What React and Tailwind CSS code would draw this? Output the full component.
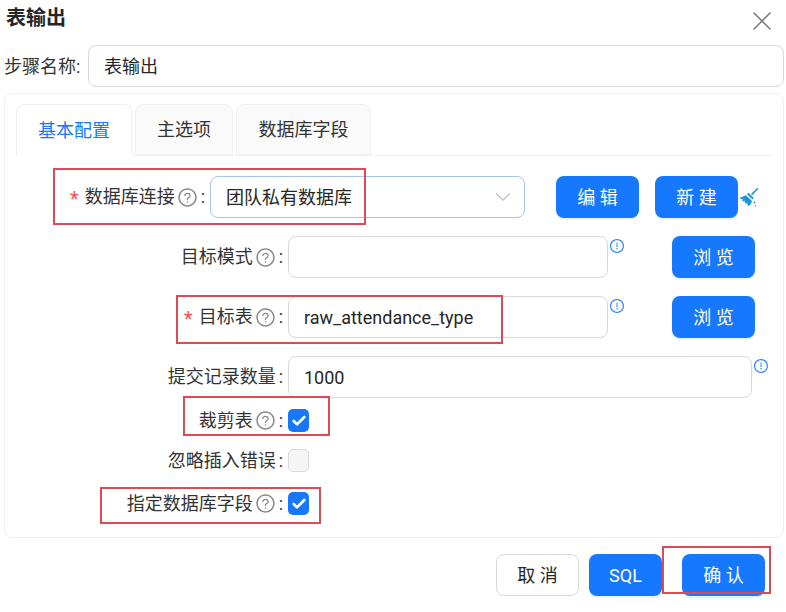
import React from 'react';
import { AiOutlineQuestionCircle, AiOutlineExclamationCircle } from 'react-icons/ai';
import { ChevronDown, Check, X } from 'lucide-react';

const FONT = 'font-["Roboto","Noto_Sans_CJK_SC",sans-serif]';

function Btn({ children, className = 'w-[83px]' }) {
    return (
        <button className={`h-[42px] rounded-lg bg-[#1677ff] text-white text-[18px] shadow-[0_2px_0_rgba(5,145,255,0.1)] ${className}`}>
            {children}
        </button>
    );
}

function Label({ text, required, help, className = 'w-[272px] pr-[5px]' }) {
    return (
        <div className={`shrink-0 flex items-center justify-end text-[18px] leading-none text-[#333] ${className}`}>
            {required && <span className="text-[#ff4d4f] text-[20px] mr-[6px] mt-[3px]">*</span>}
            <span>{text}</span>
            {help && <AiOutlineQuestionCircle size={21} className="ml-[2px] text-[#8c8c8c]" />}
            <span className="ml-[3px]">:</span>
        </div>
    );
}

function TextInput({ value, className = '' }) {
    return (
        <div className={`h-[42px] shrink-0 flex items-center px-[15px] rounded-lg border border-[#d9d9d9] bg-white text-[18px] text-[#262626] ${className}`}>
            {value}
        </div>
    );
}

function Info() {
    return <AiOutlineExclamationCircle size={16} className="ml-[1px] mb-[22px] text-[#2f86f6] shrink-0" />;
}

function Box({ checked, disabled }) {
    if (disabled) return <div className="w-[21px] h-[23px] rounded-[5px] border border-[#d9d9d9] bg-[#f5f5f5]" />;
    return (
        <div className="w-[21px] h-[23px] rounded-[5px] bg-[#1677ff] flex items-center justify-center">
            {checked && <Check size={16} strokeWidth={4} className="text-white" />}
        </div>
    );
}

function Broom() {
    return (
        <svg width="21" height="21" viewBox="0 0 21 21" className="text-[#1b95d6] shrink-0" fill="currentColor">
            <path d="M19.6 0.8l0.9 0.9-6.2 6.6-1.3-1.3z" />
            <path d="M10.6 5.8l5.1 5.1-1.2 1.6-5.6-5.4z" />
            <path d="M8 8.2l6 5.8c-0.4 1.8-1.4 3.4-3 5l-1.8-1.6 0.3-1.9-1.5 1.2-1.5-1.4 0.4-1.7-1.5 1-1.6-1.6 1.6-1.2-2.4 0.1-1.6-1.4c2-0.3 4.200-1 6.600-2.300z" />
            <circle cx="16.500" cy="15.500" r="0.900" />
            <circle cx="17.500" cy="18.800" r="0.700" />
        </svg>
    );
}

// annotation rectangles drawn on top of the form
const MARKS = [
    'left-[53px] top-[168px] w-[313px] h-[57px]',
    'left-[176px] top-[295px] w-[327px] h-[49px]',
    'left-[183px] top-[396px] w-[147px] h-[40px]',
    'left-[100px] top-[487px] w-[221px] h-[37px]',
    'left-[662px] top-[546px] w-[109px] h-[48px]',
];

export default function App() {
    return (
        <div className={`relative w-[786px] h-[612px] bg-white overflow-hidden ${FONT}`}>
            <div className="h-[45px] flex items-start justify-between pl-[6px] pr-[8px] pt-[5px]">
                <h1 className="text-[20px] leading-[26px] font-bold text-[#262626]">表输出</h1>
                <X size={32} strokeWidth={1.1} className="text-[#777]" />
            </div>

            <div className="flex items-center pl-[4px] pr-[2px]">
                <div className="w-[84px] shrink-0 text-[18px] text-[#333] whitespace-nowrap">步骤名称:</div>
                <TextInput value="表输出" className="flex-1" />
            </div>

            <div className="mt-[6px] ml-[4px] mr-[2px] h-[445px] rounded-lg border border-[#f0f0f0] px-[11px] pt-[10px]">
                <div className="flex gap-[3px] h-[52px] border-b border-[#f0f0f0] mr-[-1px] text-[18px]">
                    <div className="w-[116px] flex items-center justify-center rounded-t-lg border border-[#f0f0f0] border-b-white h-[52px] bg-white text-[#1677ff]">基本配置</div>
                    <div className="w-[98px] flex items-center justify-center rounded-t-lg border border-[#f0f0f0] bg-[#fafafa] text-[#333]">主选项</div>
                    <div className="w-[135px] flex items-center justify-center rounded-t-lg border border-[#f0f0f0] bg-[#fafafa] text-[#333]">数据库字段</div>
                </div>

                <div className="flex items-center mt-[20px]">
                    <Label text="数据库连接" required help className="w-[194px] pr-[5px]" />
                    <div className="w-[315px] h-[42px] shrink-0 flex items-center justify-between pl-[15px] pr-[8px] rounded-lg border border-[#a9c4e8] text-[18px] text-[#262626]">
                        团队私有数据库
                        <ChevronDown size={26} strokeWidth={1} className="text-[#bfbfbf]" />
                    </div>
                    <Btn className="w-[83px] ml-[31px]">编 辑</Btn>
                    <Btn className="w-[83px] ml-[16px]">新 建</Btn>
                    <Broom />
                </div>

                <div className="flex items-center mt-[18px]">
                    <Label text="目标模式" help />
                    <TextInput className="w-[320px]" />
                    <Info />
                    <Btn className="w-[83px] ml-[47px]">浏 览</Btn>
                </div>

                <div className="flex items-center mt-[18px]">
                    <Label text="目标表" required help />
                    <TextInput value="raw_attendance_type" className="w-[320px]" />
                    <Info />
                    <Btn className="w-[83px] ml-[47px]">浏 览</Btn>
                </div>

                <div className="flex items-center mt-[18px]">
                    <Label text="提交记录数量" />
                    <TextInput value="1000" className="w-[464px]" />
                    <Info />
                </div>

                <div className="flex items-center mt-[11px]">
                    <Label text="裁剪表" help />
                    <Box checked />
                </div>

                <div className="flex items-center mt-[17px]">
                    <Label text="忽略插入错误" />
                    <Box disabled />
                </div>

                <div className="flex items-center mt-[20px]">
                    <Label text="指定数据库字段" help />
                    <Box checked />
                </div>
            </div>

            <div className="flex justify-end pr-[21px] mt-[16px]">
                <button className="h-[42px] w-[83px] rounded-lg border border-[#d9d9d9] bg-white text-[18px] text-[#262626]">取 消</button>
                <Btn className="w-[73px] ml-[10px]">SQL</Btn>
                <Btn className="w-[83px] ml-[20px]">确 认</Btn>
            </div>

            {MARKS.map((m, i) => (
                <div key={i} className={`absolute border-2 border-[#dc4a52] pointer-events-none ${m}`} />
            ))}
        </div>
    );
}
